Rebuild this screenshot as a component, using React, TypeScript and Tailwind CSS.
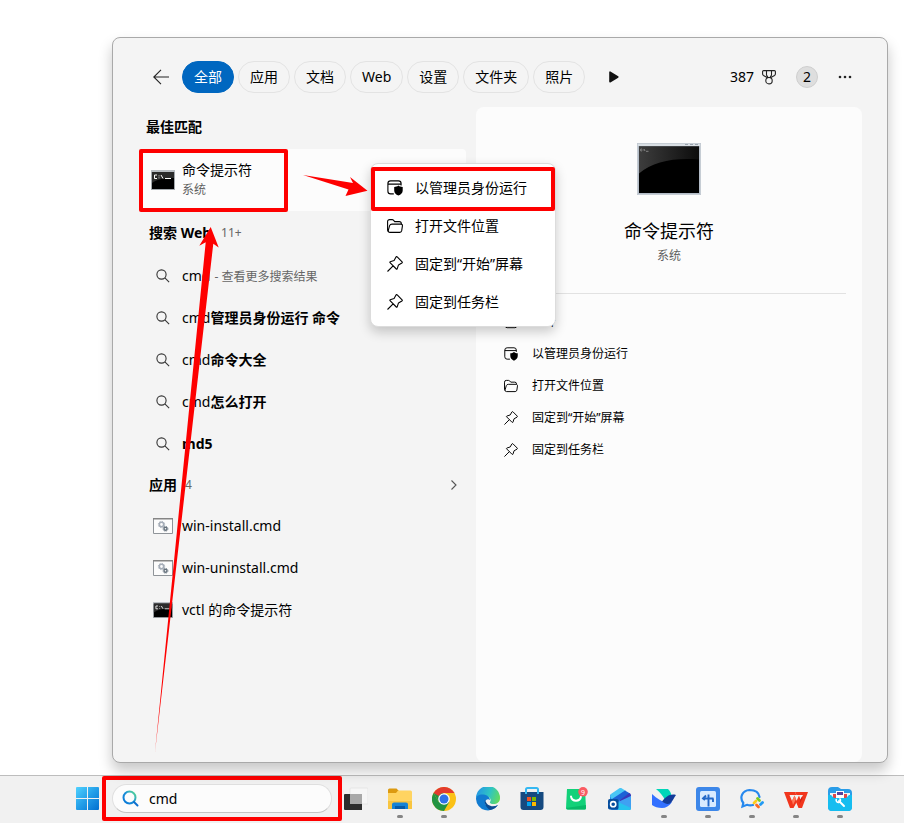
import { useState, type ReactNode } from 'react'

const FILTERS = ['全部', '应用', '文档', 'Web', '设置', '文件夹', '照片']

const WEB_RESULTS = [
  { typed: 'cmd', rest: '', note: '- 查看更多搜索结果' },
  { typed: 'cmd', rest: '管理员身份运行 命令', note: '' },
  { typed: 'cmd', rest: '命令大全', note: '' },
  { typed: 'cmd', rest: '怎么打开', note: '' },
  { typed: '', rest: 'md5', note: '' },
]

function AdminIcon({ size = 16 }: { size?: number }) {
  return (
    <svg width={size} height={size} viewBox="0 0 16 16" fill="none" aria-hidden="true">
      <path
        d="M6.8 13.9H3.6A2.7 2.7 0 0 1 .9 11.2V3.6A2.7 2.7 0 0 1 3.6.9h7.8a2.7 2.7 0 0 1 2.7 2.7v1.9M.9 4.1h13.2"
        stroke="currentColor"
        strokeWidth="1.1"
      />
      <path d="M11.4 5.6c1.2 1 2.6 1.4 4.3 1.4v3.4c0 2.4-1.7 4.1-4.3 5.2-2.6-1.1-4.2-2.8-4.2-5.2V7c1.700 0 3-.4 4.2-1.4Z" fill="currentColor" />
    </svg>
  )
}

function FolderIcon({ size = 16 }: { size?: number }) {
  return (
    <svg width={size} height={size} viewBox="0 0 16 16" fill="none" stroke="currentColor" strokeWidth="1.1" aria-hidden="true">
      <path d="M1.600 13.600A2 2 0 0 1 .6 11.900V3.600a2 2 0 0 1 2-2h2.600c.5 0 .9.2 1.200.5l1.300 1.500h4.600a2 2 0 0 1 2 2v.5" />
      <path d="M5 6.100h8.900c1.100 0 1.700.9 1.500 2l-.7 4.600c-.2 1-.9 1.700-1.900 1.700H3c-1.200 0-2-.9-1.700-2L2.600 7.600c.4-1 1.200-1.500 2.400-1.500Z" />
    </svg>
  )
}

function PinIcon({ size = 16 }: { size?: number }) {
  return (
    <svg width={size} height={size} viewBox="0 0 16 16" fill="none" stroke="currentColor" strokeWidth="1.1" strokeLinejoin="round" aria-hidden="true">
      <path d="M10.2.9 15.1 5.8c.4.4.3.9-.2 1.2l-3.4 1.9-1.3 3.9c-.1.4-.6.5-.9.2L3 6.700c-.3-.3-.2-.8.2-.9l3.900-1.300L9 1.100c.3-.5.8-.6 1.200-.2ZM6.100 9.900.5 15.500" />
    </svg>
  )
}

function OpenIcon({ size = 16 }: { size?: number }) {
  return (
    <svg width={size} height={size} viewBox="0 0 16 16" fill="none" stroke="currentColor" strokeWidth="1.1" aria-hidden="true">
      <path d="M6 1.500H3.500a2 2 0 0 0-2 2v9a2 2 0 0 0 2 2h9a2 2 0 0 0 2-2V10M9 1.500h5.500V7M14.500 1.500 8 8" />
    </svg>
  )
}

function SearchIcon() {
  return (
    <svg width="14" height="14" viewBox="0 0 14 14" fill="none" stroke="#333" strokeWidth="1.100" aria-hidden="true">
      <circle cx="5.500" cy="5.500" r="4.600" />
      <path d="m8.900 8.900 4.200 4.200" />
    </svg>
  )
}

function ConsoleIcon({ width = 24, height = 20 }: { width?: number; height?: number }) {
  return (
    <svg width={width} height={height} viewBox="0 0 24 20" preserveAspectRatio="none" aria-hidden="true">
      <rect x=".5" y=".5" width="23" height="19" fill="#000" stroke="#a3a8ad" />
      <path d="M0 0h24v2H0z" fill="#b9bec3" />
      <path d="M1 2h22v6C14 8 6 9 1 13z" fill="#2b2b2b" />
      <path d="M6 5H3.500v3.500H6M8 5.500v.8M8 7.500v.8M10 5l2 3.500M14 8.500h6" stroke="#fff" strokeWidth="1" fill="none" />
    </svg>
  )
}

function BatchIcon() {
  return (
    <svg width="20" height="16" viewBox="0 0 20 16" fill="none" aria-hidden="true">
      <path d="M.5.500h19v15H.500z" fill="#fcfcfc" stroke="#8f9499" />
      <path d="M0 0h20v1.500H0z" fill="#858585" />
      <circle cx="8.500" cy="6.500" r="2.200" stroke="#a5adb8" strokeWidth="1.600" />
      <circle cx="8.500" cy="6.500" r="3.200" stroke="#a5adb8" strokeWidth="1" strokeDasharray="1.200 1.300" />
      <circle cx="12.500" cy="10.800" r="1.500" stroke="#66727d" strokeWidth="1.400" />
      <circle cx="12.500" cy="10.800" r="2.500" stroke="#66727d" strokeWidth=".8" strokeDasharray="1 1" />
    </svg>
  )
}

function LargeConsole() {
  return (
    <svg width="64" height="52" viewBox="0 0 64 52" aria-hidden="true">
      <defs>
        <linearGradient id="console-shine" x1="0" y1="0" x2="1" y2="0">
          <stop offset="0" stopColor="#3d3d3d" />
          <stop offset="1" stopColor="#0c0c0c" />
        </linearGradient>
      </defs>
      <path d="M0 0h64v52H0z" fill="#b3bcc7" />
      <path d="M.5.500h63v51H.500z" fill="none" stroke="#c6cdd4" />
      <path d="M1 1h62v2H1z" fill="#d9dfe4" />
      <path d="M48 1.500h3M53 1.500h3M58 1.500h3" stroke="#9aa3ad" />
      <path d="M2 3.500h60V50H2z" fill="#000" />
      <path d="M2 3.500h60v13c-25-2-46 2-60 14z" fill="url(#console-shine)" />
      <path d="M4.800 6H3.800v2h1M6 6.200v.5M6 7.500v.5M7 6l1 2M9 8.300h2.500" stroke="#bbb" strokeWidth=".6" fill="none" />
    </svg>
  )
}

const ACTIONS = [
  { label: '以管理员身份运行', Icon: AdminIcon },
  { label: '打开文件位置', Icon: FolderIcon },
  { label: '固定到“开始”屏幕', Icon: PinIcon },
  { label: '固定到任务栏', Icon: PinIcon },
]

const APPS = [
  { name: 'win-install.cmd', icon: <BatchIcon /> },
  { name: 'win-uninstall.cmd', icon: <BatchIcon /> },
  { name: 'vctl 的命令提示符', icon: <ConsoleIcon width={20} height={16} /> },
]

function TaskIcon({ label, running, children }: { label: string; running?: boolean; children: ReactNode }) {
  return (
    <button type="button" aria-label={label} className="relative flex h-full w-11 shrink-0 items-center justify-center">
      <svg width="24" height="24" viewBox="0 0 24 24" fill="none" aria-hidden="true">
        {children}
      </svg>
      {running && <span className="absolute bottom-[3px] h-[3px] w-1.5 rounded-full bg-[#858585]" />}
    </button>
  )
}

function Taskbar() {
  const [query, setQuery] = useState('cmd')

  return (
    <footer className="flex h-12 items-center border-t border-[#bdbdbd] bg-[#f1f1f1] pb-0.5 pl-[76px]">
      <button type="button" aria-label="开始" className="w-[26px] shrink-0">
        <svg width="23" height="23" viewBox="0 0 23 23" aria-hidden="true">
          <defs>
            <linearGradient id="start-blue" x1="0" y1="0" x2="23" y2="23" gradientUnits="userSpaceOnUse">
              <stop stopColor="#50d2ff" />
              <stop offset=".5" stopColor="#239ee8" />
              <stop offset="1" stopColor="#006fd0" />
            </linearGradient>
          </defs>
          <path d="M1 0h10v11H0V1a1 1 0 0 1 1-1ZM12 0h10a1 1 0 0 1 1 1v10H12zM0 12h11v11H1a1 1 0 0 1-1-1zM12 12h11v10a1 1 0 0 1-1 1H12z" fill="url(#start-blue)" />
        </svg>
      </button>

      <div className="h-[45px] w-60 shrink-0 rounded-[2px] border-4 border-[#fe0000] px-[6px] py-1">
        <div className="flex h-full items-center rounded-full border border-[#e0e0e0] border-b-[#c4c4c4] bg-[#fcfcfc] pl-[9px]">
          <svg width="17" height="17" viewBox="0 0 17 17" fill="none" aria-hidden="true">
            <defs>
              <linearGradient id="search-ring" x1="2" y1="13" x2="14" y2="2" gradientUnits="userSpaceOnUse">
                <stop stopColor="#0877d8" />
                <stop offset=".5" stopColor="#1b91d8" />
                <stop offset="1" stopColor="#5fe08a" />
              </linearGradient>
            </defs>
            <circle cx="7.500" cy="7.500" r="6" stroke="url(#search-ring)" strokeWidth="2" />
            <path d="m12 12 3.500 3.500" stroke="#0d6fce" strokeWidth="2" strokeLinecap="round" />
          </svg>
          <input
            aria-label="搜索"
            value={query}
            onChange={(event) => setQuery(event.target.value)}
            className="ml-2.5 w-40 bg-transparent text-sm outline-none"
          />
        </div>
      </div>

      <nav aria-label="任务栏" className="-ml-2 flex h-full">
        <TaskIcon label="任务视图">
          <path d="M6 2a1 1 0 0 1 1-1h16a1 1 0 0 1 1 1v15H6z" fill="#f6f6f6" stroke="#dedede" strokeWidth=".6" />
          <path d="M0 8a1 1 0 0 1 1-1h17v16H1a1 1 0 0 1-1-1z" fill="#2d2d2d" />
          <path d="M6 7h12v10H6z" fill="#a8a8a8" />
        </TaskIcon>
        <TaskIcon label="文件资源管理器" running>
          <path d="M0 3a1.500 1.500 0 0 1 1.500-1.500h7L11 4v4H0z" fill="#dc9a10" />
          <path d="M0 6h8l2-2.500h12.500A1.500 1.500 0 0 1 24 5v17H0z" fill="#ffd461" />
          <path d="M0 14h24v8H0z" fill="#f8c541" />
          <path d="M4 22v-4.500a2 2 0 0 1 2-2h12a2 2 0 0 1 2 2V22z" fill="#1583d6" />
          <path d="M7 19h10v3H7z" fill="#055aa7" />
        </TaskIcon>
        <TaskIcon label="Chrome" running>
          <circle cx="12" cy="12" r="12" fill="#fbc116" />
          <path d="M1.600 6a12 12 0 0 0 10.400 18l5.200-9L12 12 6.800 15z" fill="#229342" />
          <path d="M1.600 6 6.800 15l1-6 4.200-3z" fill="#229342" />
          <path d="M1.600 6A12 12 0 0 1 22.400 6H12a6 6 0 0 0-5.200 3z" fill="#e33b2e" />
          <circle cx="12" cy="12" r="5.800" fill="#fff" />
          <circle cx="12" cy="12" r="4.500" fill="#2f72e8" />
        </TaskIcon>
        <TaskIcon label="Edge">
          <defs>
            <linearGradient id="edge-top" x1="2" y1="4" x2="24" y2="12" gradientUnits="userSpaceOnUse">
              <stop stopColor="#259be1" />
              <stop offset=".5" stopColor="#2fc4c3" />
              <stop offset="1" stopColor="#66dc58" />
            </linearGradient>
          </defs>
          <path d="M0 11A12 12 0 0 1 24 11c0 4-3 6-6.500 6-3 0-4-1-3.500-2 2-3-1-6-5-6-4 0-7.500 1-9 2Z" fill="url(#edge-top)" />
          <path d="M0 12c0-3 3.500-5 7.500-4.500 4 .3 6.500 3 6.500 5.500-2-2-5.500 0-5 3 .5 4 6 6 13 2A12 12 0 0 1 0 12Z" fill="#127bd0" />
          <path d="M9 12.500c-1 3.500 1 8 5 10.500 3.500-.5 6-2.500 8-5-5 2.500-11.500 1.500-13-5.500Z" fill="#0d4b91" />
        </TaskIcon>
        <TaskIcon label="Microsoft Store">
          <path d="M6 7V2.500A1.500 1.500 0 0 1 7.500 1h9A1.500 1.500 0 0 1 18 2.500V7" stroke="#35b8f2" strokeWidth="2" />
          <path d="M.5 5h23v15a3 3 0 0 1-3 3h-17a3 3 0 0 1-3-3z" fill="#164a80" />
          <path d="M6 5v2M18 5v2" stroke="#35b8f2" strokeWidth="2" />
          <path d="M7 10h4v4H7z" fill="#f25022" />
          <path d="M12 10h4v4h-4z" fill="#7fba00" />
          <path d="M7 15h4v4H7z" fill="#00a4ef" />
          <path d="M12 15h4v4h-4z" fill="#ffb900" />
        </TaskIcon>
        <TaskIcon label="应用商城">
          <path d="M3 2h18l1 19a1.500 1.500 0 0 1-1.500 1.500h-17A1.500 1.500 0 0 1 2 21z" fill="#12d179" />
          <path d="M2 21 22 18v3a1.500 1.500 0 0 1-1.500 1.500h-17z" fill="#08b968" />
          <path d="M7 9.500c1 5.500 9 5.500 10 0" stroke="#fff" strokeWidth="2" strokeLinecap="round" />
          <circle cx="19" cy="4.800" r="4.800" fill="#fa5b62" />
          <text x="17" y="7.500" fontSize="7" fill="#fff">9</text>
        </TaskIcon>
        <TaskIcon label="Outlook">
          <path d="m2 8 10-6 11 6v13a2 2 0 0 1-2 2H4a2 2 0 0 1-2-2z" fill="#2784e3" />
          <path d="m3 7 8-5.500c1-.6 2-.6 3 0L18 4 4 13 2 9z" fill="#49c6f5" />
          <path d="M4 12 17 3.500l5 3L9 15z" fill="#1c62d6" />
          <path d="m12 13 9.500-7c1 .6 1.500 1.500 1.500 3l-11 7z" fill="#3a37b9" />
          <path d="m10 15 13-6v12a2 2 0 0 1-2 2H10z" fill="#3fa0f2" />
          <path d="m10 15 13 6c0 1-1 2-2 2H10z" fill="#26c2ee" />
          <rect y="12" width="10.500" height="10.500" rx="1.800" fill="#064e9e" />
          <circle cx="5.200" cy="17.200" r="2.600" stroke="#fff" strokeWidth="1.600" />
        </TaskIcon>
        <TaskIcon label="飞书" running>
          <path d="M4 2h12c2 2 3 4 3.500 6.500L13 13c-2-4-5-8-9-11Z" fill="#00d6b9" />
          <path d="M0 7c5 5 10 7.500 15 9l5-1c-3 4-6 6-10 6-4 0-7.500-1-10-3z" fill="#3370ff" />
          <path d="M10 14.500c4-5 8-8 14-6.500-2 2-3 6.500-6 8.500-3 1-5 0-8-2Z" fill="#133c9a" />
        </TaskIcon>
        <TaskIcon label="文件传输" running>
          <rect width="24" height="24" rx="3" fill="#3d87e9" />
          <rect x="4" y="4" width="16" height="16" rx="1.500" fill="#d9eaff" />
          <path d="M12.500 19.500V7.500M7 11.500h10.500M10 8.500l-3 3 2 1.500M17 11.500V15" stroke="#2468c8" strokeWidth="1.900" />
        </TaskIcon>
        <TaskIcon label="企业微信" running>
          <path d="M13 18c-2 .6-4 .5-6-.2L2.500 19.500l.8-3.500C-1 10 2.500 3.500 9.500 3c6 0 9.500 3 10 7" stroke="#2688ee" strokeWidth="2.200" strokeLinecap="round" />
          <path d="m17.500 11.500 2 2" stroke="#7ccb20" strokeWidth="2.800" strokeLinecap="round" />
          <path d="m22.500 15.500-2 2" stroke="#249bf3" strokeWidth="2.800" strokeLinecap="round" />
          <path d="m14 16 2-2" stroke="#ffcd17" strokeWidth="2.800" strokeLinecap="round" />
          <path d="m18.500 20-2-2" stroke="#fb6b22" strokeWidth="2.800" strokeLinecap="round" />
        </TaskIcon>
        <TaskIcon label="WPS Office" running>
          <path d="M0 5h11l1.500 3H5.500L8 14l2.500-5.500L13 14.500 9.500 21H6z" fill="#f1361d" />
          <path d="M11 5h13l-6 16h-3.500l-2.500-6 3-6.500 1.500 4L19 8h-6.500z" fill="#f1361d" />
          <path d="m8 14 2.500-5.500 1.500 3.500-3 6z" fill="#ff7a5c" />
          <path d="m16.500 12.500 1.500-3 .5 1.500-3 6z" fill="#c91d12" />
        </TaskIcon>
        <TaskIcon label="工具箱" running>
          <path d="M0 4a4 4 0 0 1 4-4h6l3 2h7a4 4 0 0 1 4 4v14a4 4 0 0 1-4 4H4a4 4 0 0 1-4-4z" fill="#2a9de8" />
          <path d="M2 6h20v8H2z" fill="#eef4f8" />
          <path d="M5 7h3v4H5zM16 7h3v4h-3z" fill="#e04949" />
          <path d="M8 4h8v7H8z" fill="#fff" />
          <path d="M9 5h6v3H9z" fill="#59449c" />
          <path d="M0 8h3l3 3h12l3-3h3v12a4 4 0 0 1-4 4H4a4 4 0 0 1-4-4z" fill="#16bdf0" />
          <path d="m11 14 5 5" stroke="#fff" strokeWidth="2" strokeLinecap="round" />
          <path d="M8.200 12.500c-.4 2 1.300 3.300 3 2.700 1.200-.6 1.600-2 .8-3.200" stroke="#fff" strokeWidth="1.600" strokeLinecap="round" />
        </TaskIcon>
      </nav>
    </footer>
  )
}

function ContextMenu() {
  return (
    <div
      role="menu"
      className="absolute top-[14px] left-[230px] z-20 w-[186px] rounded-lg border border-[#dcdcdc] bg-white py-[5px] shadow-[0_5px_12px_rgba(0,0,0,0.2)]"
    >
      {ACTIONS.map(({ label, Icon }) => (
        <button
          key={label}
          type="button"
          role="menuitem"
          className="flex h-[38px] w-full items-center gap-3 pl-4 text-sm whitespace-nowrap"
        >
          <Icon />
          {label}
        </button>
      ))}
      <span className="pointer-events-none absolute top-[3px] left-0 h-11 w-[184px] rounded-[2px] border-4 border-[#fe0000]" />
    </div>
  )
}

function Preview() {
  return (
    <section className="flex-1 rounded-lg bg-[#fcfcfc] px-4 pt-9" aria-label="命令提示符">
      <div className="flex flex-col items-center border-b border-[#e2e2e2] pb-7">
        <LargeConsole />
        <h2 className="mt-5 text-lg leading-8">命令提示符</h2>
        <p className="text-xs leading-[18px] text-[#5f5f5f]">系统</p>
      </div>
      <ul className="pt-3">
        {[{ label: '打开', Icon: OpenIcon }, ...ACTIONS].map(({ label, Icon }) => (
          <li key={label}>
            <button type="button" className="flex h-8 w-full items-center gap-[14px] pl-3 text-xs">
              <Icon size={14} />
              {label}
            </button>
          </li>
        ))}
      </ul>
    </section>
  )
}

export default function App() {
  const [filter, setFilter] = useState('全部')

  return (
    <div className="flex min-h-screen flex-col overflow-hidden bg-white font-['Noto_Sans','Noto_Sans_CJK_SC',sans-serif] text-black">
      <main className="relative mt-[37px] mr-4 mb-3 ml-28 flex flex-1 flex-col rounded-lg border border-[#a9a9a9] bg-[#f4f4f4] pr-[25px] shadow-[0_8px_14px_rgba(0,0,0,0.22)]">
        <header className="mt-[23px] mb-[14px] flex h-8 items-center pl-10">
          <button type="button" aria-label="返回" className="mr-[13px]">
            <svg width="16" height="16" viewBox="0 0 16 16" fill="none" stroke="#222" strokeWidth="1.100" aria-hidden="true">
              <path d="M16 8H.8M8 .8.8 8 8 15.200" />
            </svg>
          </button>
          <div className="flex gap-1">
            {FILTERS.map((name) => (
              <button
                key={name}
                type="button"
                aria-pressed={filter === name}
                onClick={() => setFilter(name)}
                className={`h-8 rounded-full border px-[11px] text-sm whitespace-nowrap ${
                  filter === name ? 'border-[#0067c0] bg-[#0067c0] text-white' : 'border-[#e3e3e3]'
                }`}
              >
                {name}
              </button>
            ))}
          </div>
          <button type="button" aria-label="更多筛选" className="ml-6">
            <svg width="10" height="12" viewBox="0 0 10 12" aria-hidden="true">
              <path d="M1 1.200v9.600L8.800 6z" fill="#111" stroke="#111" strokeWidth="1.600" strokeLinejoin="round" />
            </svg>
          </button>
          <div className="ml-auto flex items-center text-sm">
            <span>387</span>
            <svg width="14" height="15" viewBox="0 0 14 15" fill="none" stroke="#222" strokeWidth="1.100" className="ml-2" aria-hidden="true">
              <path d="M1.600.600h10.800a1 1 0 0 1 1 1V4c0 .7-.3 1.100-.9 1.500L9 7.500H5L1.500 5.500C.9 5.100.6 4.700.6 4V1.600a1 1 0 0 1 1-1ZM4.500.600V5L6 7.500M9.500.600V5L8 7.500" />
              <circle cx="7" cy="10.700" r="3.200" />
            </svg>
            <button type="button" className="ml-5 h-[22px] w-[22px] rounded-full border border-[#cfcfcf] bg-[#dedede] leading-5">
              2
            </button>
            <button type="button" aria-label="更多" className="mr-[10px] ml-5">
              <svg width="14" height="4" viewBox="0 0 14 4" fill="#222" aria-hidden="true">
                <circle cx="2" cy="2" r="1.300" />
                <circle cx="7" cy="2" r="1.300" />
                <circle cx="12" cy="2" r="1.300" />
              </svg>
            </button>
          </div>
        </header>

        <div className="flex flex-1">
          <section className="w-[363px] shrink-0 pr-[10px] pl-[27px]">
            <h2 className="mb-0.5 flex h-10 items-center pl-1.5 text-sm font-bold">最佳匹配</h2>
            <div className="relative h-[62px] rounded bg-[#fcfcfc]">
              <button type="button" className="flex h-full w-full items-center gap-[7px] pl-[11px] text-left">
                <ConsoleIcon />
                <span>
                  <span className="block text-sm leading-5">命令提示符</span>
                  <span className="block text-xs leading-5 text-[#5f5f5f]">系统</span>
                </span>
              </button>
              <span className="pointer-events-none absolute top-0 -left-px h-[63px] w-[149px] rounded-[2px] border-4 border-[#fe0000]" />
              <ContextMenu />
            </div>

            <h2 className="flex h-11 items-center pl-[9px] text-sm font-bold">
              搜索 Web
              <span className="ml-2.5 text-xs font-normal text-[#666]">11+</span>
            </h2>
            <ul>
              {WEB_RESULTS.map(({ typed, rest, note }) => (
                <li key={typed + rest}>
                  <button type="button" className="flex h-[42px] w-full items-center pl-4 text-sm">
                    <SearchIcon />
                    <span className="ml-3">
                      {typed}
                      <b>{rest}</b>
                      {note && <span className="ml-1 text-xs text-[#666]">{note}</span>}
                    </span>
                  </button>
                </li>
              ))}
            </ul>

            <h2 className="flex h-10 items-center pr-2 pl-[9px] text-sm font-bold">
              应用
              <span className="ml-2 text-xs font-normal text-[#666]">4</span>
              <svg width="8" height="10" viewBox="0 0 8 10" fill="none" stroke="#555" strokeWidth="1.100" className="ml-auto" aria-hidden="true">
                <path d="m1.500.5 4.500 4.500-4.500 4.500" />
              </svg>
            </h2>
            <ul>
              {APPS.map(({ name, icon }) => (
                <li key={name}>
                  <button type="button" className="flex h-[42px] w-full items-center gap-[9px] pl-[13px] text-sm">
                    {icon}
                    {name}
                  </button>
                </li>
              ))}
            </ul>
          </section>
          <Preview />
        </div>

        {/* Red arrows: search box -> best match -> run as administrator */}
        <svg className="pointer-events-none absolute top-0 left-0 z-30" width="260" height="720" viewBox="113 38 260 720" fill="#fe0000" aria-hidden="true">
          <path d="m303 175 50 8-3-6 17.500 13.700L345.500 196l3-6.500z" />
          <path d="m210.700 227 8 20.500-5.400-3.800L155 752l50.700-509.700-6.400 3.400z" />
        </svg>
      </main>
      <Taskbar />
    </div>
  )
}
